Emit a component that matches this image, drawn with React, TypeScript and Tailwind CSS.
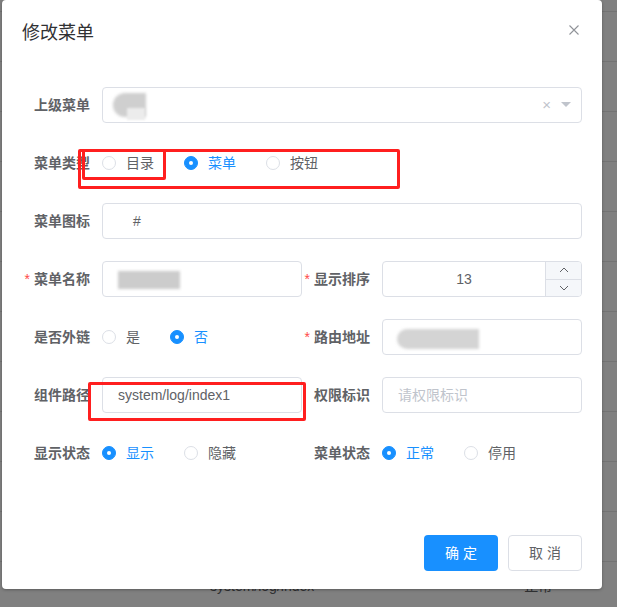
import React from 'react'

const font = { fontFamily: '"Liberation Sans", "Noto Sans CJK SC", sans-serif' }

function Radio({ label, checked, last }: { label: string; checked?: boolean; last?: boolean }) {
  return (
    <label className={`flex items-center ${last ? '' : 'mr-[30px]'}`}>
      {checked ? (
        <span className="w-[14px] h-[14px] rounded-full bg-[#1890ff] border border-[#1890ff] flex items-center justify-center">
          <span className="w-[4px] h-[4px] rounded-full bg-white" />
        </span>
      ) : (
        <span className="w-[14px] h-[14px] rounded-full bg-white border border-[#dcdfe6]" />
      )}
      <span className={`pl-[10px] text-sm ${checked ? 'text-[#1890ff]' : 'text-[#606266]'}`}>{label}</span>
    </label>
  )
}

function Item({ label, required, children, half }: { label: string; required?: boolean; children: React.ReactNode; half?: boolean }) {
  return (
    <div className={`flex h-[36px] ${half ? 'w-[280px]' : 'w-full'}`}>
      <div className="w-[80px] shrink-0 pr-3 flex items-center justify-end text-sm font-bold text-[#606266]">
        {required && <span className="text-[#ff4949] mr-[4px] font-normal">*</span>}
        {label}
      </div>
      <div className="flex-1 flex items-center min-w-0">{children}</div>
    </div>
  )
}

function Input({ children, className = '' }: { children?: React.ReactNode; className?: string }) {
  return (
    <div className={`relative h-[36px] w-full border border-[#dcdfe6] rounded bg-white flex items-center text-sm text-[#606266] ${className}`}>
      {children}
    </div>
  )
}

export default function App() {
  return (
    <div className="relative w-[617px] h-[607px] overflow-hidden bg-[#808080]" style={font}>
      {/* page underneath the overlay */}
      <div className="flex flex-col mt-[-38px]">
        {Array.from({ length: 13 }).map((_, i) => (
          <div key={i} className="h-[50px] shrink-0 border-b border-[#737373] flex items-center text-sm text-[#303133]">
            {i === 12 && (
              <>
                <span className="ml-[210px] mt-[-2px]">system/log/index</span>
                <span className="ml-[210px] mt-[-2px]">正常</span>
              </>
            )}
          </div>
        ))}
      </div>

      {/* dialog */}
      <div className="absolute left-[2px] top-0 w-[600px] h-[589px] bg-white rounded-sm shadow-[0_1px_3px_rgba(0,0,0,0.3)] flex flex-col">
        <div className="relative px-5 pt-[21px] pb-[10px]">
          <div className="text-lg leading-6 text-[#303133]">修改菜单</div>
          <svg className="absolute right-[20px] top-[22px]" width="16" height="16" viewBox="0 0 16 16">
            <path d="M3.5 3.5 L12.5 12.5 M12.5 3.5 L3.5 12.5" stroke="#909399" strokeWidth="1.1" />
          </svg>
        </div>

        <div className="relative px-5 pt-[32px] pb-[52px] flex flex-col gap-[22px]">
          <Item label="上级菜单">
            <Input>
              <div className="absolute left-[10px] top-[5px] w-[33px] h-[24px] rounded-l-full bg-[#cfcfcf] blur-[1.5px]" />
              <div className="absolute left-[24px] top-[20px] w-[18px] h-[12px] bg-[#ececec] blur-[1px]" />
              <span className="absolute right-[30px] text-[#c0c4cc] text-[15px]">×</span>
              <svg className="absolute right-[10px]" width="10" height="6" viewBox="0 0 10 6">
                <path d="M0 0 L10 0 L5 5 Z" fill="#c0c4cc" />
              </svg>
            </Input>
          </Item>

          <Item label="菜单类型">
            <Radio label="目录" />
            <Radio label="菜单" checked />
            <Radio label="按钮" last />
          </Item>

          <Item label="菜单图标">
            <Input className="pl-[30px]">#</Input>
          </Item>

          <div className="flex">
            <Item label="菜单名称" required half>
              <Input>
                <div className="absolute left-[15px] top-[9px] w-[62px] h-[18px] bg-[#cccccc] blur-[1.5px]" />
              </Input>
            </Item>
            <Item label="显示排序" required half>
              <Input className="overflow-hidden">
                <span className="flex-1 text-center pr-[36px]">13</span>
                <div className="absolute right-0 top-0 bottom-0 w-[36px] bg-[#f5f7fa] border-l border-[#dcdfe6] flex flex-col">
                  <div className="flex-1 flex items-center justify-center border-b border-[#dcdfe6]">
                    <svg width="10" height="6" viewBox="0 0 10 6">
                      <path d="M1 5 L5 1 L9 5" stroke="#606266" strokeWidth="1" fill="none" />
                    </svg>
                  </div>
                  <div className="flex-1 flex items-center justify-center">
                    <svg width="10" height="6" viewBox="0 0 10 6">
                      <path d="M1 1 L5 5 L9 1" stroke="#606266" strokeWidth="1" fill="none" />
                    </svg>
                  </div>
                </div>
              </Input>
            </Item>
          </div>

          <div className="flex">
            <Item label="是否外链" half>
              <Radio label="是" />
              <Radio label="否" checked last />
            </Item>
            <Item label="路由地址" required half>
              <Input>
                <div className="absolute left-[14px] top-[9px] w-[82px] h-[20px] rounded-l-full bg-[#d4d4d4] blur-[1.5px]" />
              </Input>
            </Item>
          </div>

          <div className="flex">
            <Item label="组件路径" half>
              <Input className="pl-[15px]">system/log/index1</Input>
            </Item>
            <Item label="权限标识" half>
              <Input className="pl-[15px] text-[#c0c4cc]">请权限标识</Input>
            </Item>
          </div>

          <div className="flex">
            <Item label="显示状态" half>
              <Radio label="显示" checked />
              <Radio label="隐藏" last />
            </Item>
            <Item label="菜单状态" half>
              <Radio label="正常" checked />
              <Radio label="停用" last />
            </Item>
          </div>

          {/* red annotation boxes */}
          <div className="absolute left-[76px] top-[94px] w-[322px] h-[40px] border-[3px] border-[#ff1f1f] rounded-[2px] pointer-events-none" />
          <div className="absolute left-[80px] top-[94px] w-[84px] h-[31px] border-[3px] border-[#ff1f1f] rounded-[2px] pointer-events-none" />
          <div className="absolute left-[86px] top-[327px] w-[218px] h-[39px] border-[3px] border-[#ff1f1f] rounded-[2px] pointer-events-none" />
        </div>

        <div className="flex justify-end gap-[10px] px-5 pt-[12px]">
          <button className="w-[74px] h-[36px] rounded bg-[#1890ff] text-white text-sm tracking-[4px] pl-[4px]">确定</button>
          <button className="w-[74px] h-[36px] rounded border border-[#dcdfe6] bg-white text-[#606266] text-sm tracking-[4px] pl-[4px]">取消</button>
        </div>
      </div>
    </div>
  )
}
